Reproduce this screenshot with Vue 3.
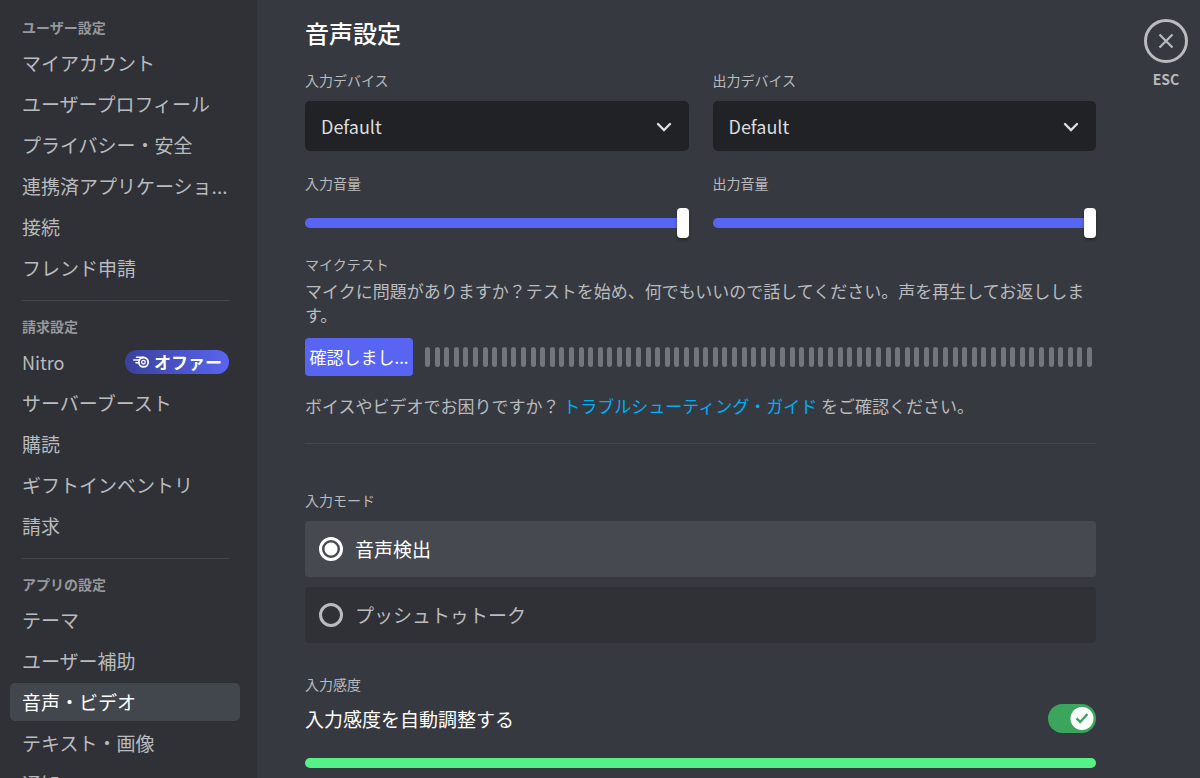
<script setup>
import { ref } from 'vue'

const groups = [
  {
    title: 'ユーザー設定',
    items: ['マイアカウント', 'ユーザープロフィール', 'プライバシー・安全', '連携済アプリケーショ...', '接続', 'フレンド申請'],
  },
  {
    title: '請求設定',
    items: ['Nitro', 'サーバーブースト', '購読', 'ギフトインベントリ', '請求'],
  },
  {
    title: 'アプリの設定',
    items: ['テーマ', 'ユーザー補助', '音声・ビデオ', 'テキスト・画像', '通知'],
  },
]
const active = ref('音声・ビデオ')

const devices = [
  { id: 'input', label: '入力デバイス', volume: '入力音量' },
  { id: 'output', label: '出力デバイス', volume: '出力音量' },
]
const volumes = ref({ input: 100, output: 100 })

const modes = [
  { value: 'voice', label: '音声検出' },
  { value: 'ptt', label: 'プッシュトゥトーク' },
]
const mode = ref('voice')
const autoSensitivity = ref(true)
</script>

<template>
  <div class="settings">
    <nav class="sidebar">
      <section v-for="group in groups" :key="group.title" class="group">
        <h2 class="group-title">{{ group.title }}</h2>
        <ul class="items">
          <li v-for="item in group.items" :key="item">
            <a href="#" class="item" :class="{ active: item === active }" @click.prevent="active = item">
              <span :class="{ latin: item === 'Nitro' }">{{ item }}</span>
              <span v-if="item === 'Nitro'" class="offer">
                <svg width="17" height="14" viewBox="0 0 17 14" aria-hidden="true">
                  <circle cx="10.5" cy="7.2" r="4.7" fill="none" stroke="#fff" stroke-width="1.8" />
                  <circle cx="10.5" cy="7.2" r="1.8" fill="none" stroke="#fff" stroke-width="1.3" />
                  <path d="M3.5 2.2H10M0.8 5H6M3 7.8H6" fill="none" stroke="#fff" stroke-width="1.5" stroke-linecap="round" />
                </svg>
                オファー
              </span>
            </a>
          </li>
        </ul>
      </section>
    </nav>

    <main class="main">
      <div class="content">
        <h1 class="title">音声設定</h1>

        <div class="columns">
          <div v-for="d in devices" :key="d.id" class="column">
            <label class="label" :for="d.id + '-device'">{{ d.label }}</label>
            <div class="select-wrap">
              <select :id="d.id + '-device'" class="select">
                <option>Default</option>
              </select>
              <svg class="chevron" width="16" height="10" viewBox="0 0 16 10" aria-hidden="true">
                <path d="M2 2L8 8L14 2" fill="none" stroke="#dcddde" stroke-width="2.4" stroke-linecap="round" />
              </svg>
            </div>
            <label class="label volume-label" :for="d.id + '-volume'">{{ d.volume }}</label>
            <input
              :id="d.id + '-volume'"
              v-model.number="volumes[d.id]"
              class="slider"
              type="range"
              min="0"
              max="100"
              :style="{ '--fill': volumes[d.id] + '%' }"
            />
          </div>
        </div>

        <h2 class="label mic-label">マイクテスト</h2>
        <p class="text">マイクに問題がありますか？テストを始め、何でもいいので話してください。声を再生してお返しします。</p>
        <div class="mic-test">
          <button class="check" type="button">確認しまし...</button>
          <div class="meter">
            <span v-for="n in 70" :key="n" class="tick"></span>
          </div>
        </div>
        <p class="text help">ボイスやビデオでお困りですか？ <a href="#" class="link">トラブルシューティング・ガイド</a> をご確認ください。</p>

        <hr class="rule" />

        <fieldset class="modes">
          <legend class="label">入力モード</legend>
          <label v-for="m in modes" :key="m.value" class="mode" :class="{ selected: mode === m.value }">
            <input v-model="mode" type="radio" name="mode" class="radio" :value="m.value" />
            <span>{{ m.label }}</span>
          </label>
        </fieldset>

        <h2 class="label sensitivity-label">入力感度</h2>
        <div class="toggle-row">
          <label for="auto-sensitivity">入力感度を自動調整する</label>
          <span class="toggle">
            <input id="auto-sensitivity" v-model="autoSensitivity" type="checkbox" class="switch" />
            <svg v-if="autoSensitivity" class="tick-mark" width="16" height="16" viewBox="0 0 16 16" aria-hidden="true">
              <path d="M2.6 8.4L6.2 12L13.4 4" fill="none" stroke="#3ba55d" stroke-width="2.4" />
            </svg>
          </span>
        </div>
        <div class="level"></div>
      </div>

      <div class="close-area">
        <button class="close" type="button" aria-label="閉じる">
          <svg width="18" height="18" viewBox="0 0 18 18" aria-hidden="true">
            <path d="M2.5 2.5L15.5 15.5M15.5 2.5L2.5 15.5" stroke="#b9bbbe" stroke-width="2.2" />
          </svg>
        </button>
        <span class="esc">ESC</span>
      </div>
    </main>
  </div>
</template>

<style>
body {
  margin: 0;
  background: #36393f;
}
</style>

<style scoped>
.settings,
.settings * {
  box-sizing: border-box;
}
.settings {
  display: flex;
  height: 100vh;
  overflow: hidden;
  background: #36393f;
  color: #b9bbbe;
  font-family: "Noto Sans CJK JP", "Noto Sans", sans-serif;
  font-size: 17px;
  line-height: 24px;
}
h1, h2, p, ul, fieldset {
  margin: 0;
  padding: 0;
  border: 0;
}
button, input, select {
  margin: 0;
  font: inherit;
}

.sidebar {
  flex: 0 0 257px;
  padding: 17px 17px 0 10px;
  background: #2f3136;
}
.group + .group::before {
  content: "";
  display: block;
  height: 1px;
  margin: 13px 11px 15px 12px;
  background: #42454a;
}
.group-title {
  padding-left: 12px;
  color: #96989d;
  font-size: 14px;
  font-weight: 700;
  line-height: 20px;
}
.items {
  display: flex;
  flex-direction: column;
  gap: 3px;
  margin-top: 7px;
  list-style: none;
}
.item {
  display: flex;
  align-items: center;
  justify-content: space-between;
  height: 38px;
  padding: 0 11px 0 12px;
  border-radius: 5px;
  color: #b9bbbe;
  font-size: 19px;
  text-decoration: none;
  white-space: nowrap;
}
.item.active {
  background: #42464d;
  color: #fff;
}
.latin {
  font-size: 18px;
}
.offer {
  display: flex;
  align-items: center;
  gap: 4px;
  height: 24px;
  padding: 0 7px 0 8px;
  border-radius: 12px;
  background: linear-gradient(90deg, #3a419b, #5865f2);
  color: #fff;
  font-size: 17px;
  font-weight: 700;
}

.main {
  display: flex;
  flex: 1;
  gap: 48px;
  min-width: 0;
  padding: 18px 12px 0 48px;
}
.content {
  flex: 1;
  min-width: 0;
}
.title {
  color: #fff;
  font-size: 24px;
  font-weight: 500;
  line-height: 30px;
}
.columns {
  display: grid;
  grid-template-columns: 1fr 1fr;
  gap: 24px;
  margin-top: 22px;
}
.column {
  display: flex;
  flex-direction: column;
}
.label {
  display: block;
  color: #b9bbbe;
  font-size: 14px;
  font-weight: 400;
  line-height: 20px;
}
.select-wrap {
  position: relative;
  margin-top: 11px;
}
.select {
  display: block;
  width: 100%;
  height: 50px;
  padding: 0 48px 0 16px;
  appearance: none;
  border: 0;
  border-radius: 5px;
  background: #202225;
  color: #dcddde;
  font-size: 18px;
}
.chevron {
  position: absolute;
  top: 21px;
  right: 17px;
  pointer-events: none;
}
.volume-label {
  margin-top: 22px;
}
.slider {
  display: block;
  width: 100%;
  height: 30px;
  margin-top: 15px;
  appearance: none;
  background: transparent;
}
.slider::-webkit-slider-runnable-track {
  height: 10px;
  border-radius: 5px;
  background: linear-gradient(90deg, #5865f2 var(--fill), #4f545c var(--fill));
}
.slider::-webkit-slider-thumb {
  width: 12px;
  height: 30px;
  margin-top: -10px;
  appearance: none;
  border-radius: 4px;
  background: #fff;
  box-shadow: 0 2px 3px rgba(0, 0, 0, 0.35);
}
.mic-label {
  margin-top: 16px;
}
.text {
  margin-top: 5px;
}
.mic-test {
  display: flex;
  align-items: center;
  gap: 12px;
  margin-top: 11px;
  padding-right: 4px;
}
.check {
  flex: 0 0 108px;
  height: 38px;
  padding: 0;
  border: 0;
  border-radius: 4px;
  background: #5865f2;
  color: #fff;
  font-size: 17px;
  white-space: nowrap;
}
.meter {
  display: flex;
  flex: 1;
  justify-content: space-between;
}
.tick {
  width: 5px;
  height: 20px;
  border-radius: 3px;
  background: #72767d;
}
.help {
  margin-top: 18px;
}
.link {
  color: #00aff4;
  text-decoration: none;
}
.rule {
  height: 1px;
  margin: 25px 0 0;
  border: 0;
  background: #42454a;
}
.modes {
  display: flex;
  flex-direction: column;
  gap: 10px;
  min-width: 0;
  margin-top: 46px;
}
.modes legend {
  margin-bottom: 11px;
  padding: 0;
}
.mode {
  display: flex;
  align-items: center;
  gap: 12px;
  height: 56px;
  padding: 0 14px;
  border-radius: 4px;
  background: #2f3136;
  font-size: 19px;
}
.mode.selected {
  background: #464950;
  color: #fff;
}
.radio {
  width: 24px;
  height: 24px;
  appearance: none;
  border: 3px solid #b9bbbe;
  border-radius: 50%;
}
.radio:checked {
  border-color: #fff;
  background: radial-gradient(circle, #fff 6px, transparent 7px);
}
.sensitivity-label {
  margin-top: 31px;
}
.toggle-row {
  display: flex;
  align-items: center;
  justify-content: space-between;
  margin-top: 10px;
  color: #fff;
  font-size: 19px;
}
.toggle {
  position: relative;
  display: flex;
}
.switch {
  width: 48px;
  height: 29px;
  appearance: none;
  border-radius: 15px;
  background: radial-gradient(circle at 15px 50%, #fff 11px, transparent 12px) #72767d;
}
.switch:checked {
  background: radial-gradient(circle at 34px 50%, #fff 11px, transparent 12px) #3ba55d;
}
.tick-mark {
  position: absolute;
  top: 6px;
  left: 26px;
  pointer-events: none;
}
.level {
  height: 10px;
  margin-top: 25px;
  border-radius: 5px;
  background: #57f287;
}
.close-area {
  display: flex;
  flex: 0 0 44px;
  flex-direction: column;
  align-items: center;
  gap: 6px;
  padding-top: 1px;
}
.close {
  display: flex;
  align-items: center;
  justify-content: center;
  width: 44px;
  height: 44px;
  padding: 0;
  border: 3px solid #b9bbbe;
  border-radius: 50%;
  background: transparent;
}
.esc {
  font-size: 14px;
  font-weight: 700;
  line-height: 20px;
}
</style>
